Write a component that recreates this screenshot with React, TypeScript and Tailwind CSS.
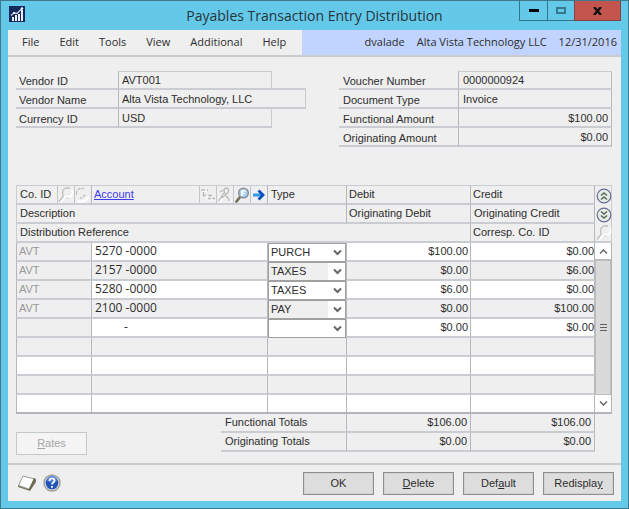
import type { ReactNode } from "react";

const menus = ["File", "Edit", "Tools", "View", "Additional", "Help"];

const vendorFields = [
  { id: "vendor-id", label: "Vendor ID", value: "AVT001", wide: false },
  { id: "vendor-name", label: "Vendor Name", value: "Alta Vista Technology, LLC", wide: true },
  { id: "currency-id", label: "Currency ID", value: "USD", wide: false },
];

const voucherFields = [
  { id: "voucher-number", label: "Voucher Number", value: "0000000924", money: false },
  { id: "document-type", label: "Document Type", value: "Invoice", money: false },
  { id: "functional-amount", label: "Functional Amount", value: "$100.00", money: true },
  { id: "originating-amount", label: "Originating Amount", value: "$0.00", money: true },
];

type Row = { co: string; account: string; type: string | null; debit: string; credit: string };

const blank: Row = { co: "", account: "", type: null, debit: "", credit: "" };

const rows: Row[] = [
  { co: "AVT", account: "5270 -0000", type: "PURCH", debit: "$100.00", credit: "$0.00" },
  { co: "AVT", account: "2157 -0000", type: "TAXES", debit: "$0.00", credit: "$6.00" },
  { co: "AVT", account: "5280 -0000", type: "TAXES", debit: "$6.00", credit: "$0.00" },
  { co: "AVT", account: "2100 -0000", type: "PAY", debit: "$0.00", credit: "$100.00" },
  { co: "", account: "-", type: "", debit: "$0.00", credit: "$0.00" },
  blank,
  blank,
  blank,
  blank,
];

const totals = [
  { label: "Functional Totals", debit: "$106.00", credit: "$106.00" },
  { label: "Originating Totals", debit: "$0.00", credit: "$0.00" },
];

function AppIcon() {
  return (
    <svg className="h-4 w-4" viewBox="0 0 16 16" aria-hidden="true">
      <rect width="16" height="16" fill="#14295c" />
      <path d="M3 15v-4h2v4zM6 15V9h2v6zM9 15V8h2v7zM12 15V4h2v11z" fill="#e8edf6" />
      <path d="M2 9.500 5 7l3 .5 5-5" fill="none" stroke="#c8d2e6" strokeWidth="1.300" />
      <circle cx="5" cy="7" r="1" fill="#fff" />
      <circle cx="13" cy="2.500" r="1.200" fill="#fff" />
    </svg>
  );
}

function FaintLookup() {
  return (
    <svg className="h-4 w-4" viewBox="0 0 16 16" fill="none" aria-hidden="true">
      <path d="M14 3c1.500 4 0 7-4 7H7L2.500 15.500" stroke="#fff" strokeWidth="1.800" />
      <path d="M5 9C4 5 5 2 8 1h4M1 14.500 5.500 9" stroke="#bdbdbd" strokeWidth="1.300" />
      <path d="M8 11h3" stroke="#d0d0d0" />
    </svg>
  );
}

function FaintNote() {
  return (
    <svg className="h-4 w-4" viewBox="0 0 16 16" fill="none" aria-hidden="true">
      <path d="M2 14.500h7l5-5" stroke="#fff" strokeWidth="1.800" />
      <path d="M1.500 8V4l3-2.500H9" stroke="#c0c0c0" strokeWidth="1.300" strokeDasharray="4 1" />
      <path d="M5 11h2m1-1.500 2-1.500" stroke="#c4c4c4" strokeWidth="1.600" />
    </svg>
  );
}

function FaintTree() {
  return (
    <svg className="h-4 w-4" viewBox="0 0 16 16" fill="none" aria-hidden="true">
      <path d="M2 4.500h5M5 10h5M10 13h5" stroke="#fff" strokeWidth="1.200" />
      <path d="M1 3h4m2 0h1M3.500 5v3.500H6M8 8.500h4M8 11.500h3m1.500 0H15" stroke="#b9b9b9" strokeWidth="1.400" />
    </svg>
  );
}

function FaintPerson() {
  return (
    <svg className="h-4 w-4" viewBox="0 0 16 16" fill="none" aria-hidden="true">
      <path d="M3 15 8 9m4 2 2 4" stroke="#fff" strokeWidth="1.200" />
      <path d="M1.500 14 7 6M3 5l3-2M8.500 7c-3-3-1-6 1-6s3 3 1 5L5 11m4-2 3 3v2" stroke="#b9b9b9" strokeWidth="1.300" />
    </svg>
  );
}

function Magnifier() {
  return (
    <svg className="h-4 w-4" viewBox="0 0 16 16" fill="none" aria-hidden="true">
      <path d="M6 10 2.500 14.500" stroke="#77725c" strokeWidth="2.800" strokeLinecap="round" />
      <circle cx="9.500" cy="6" r="4.800" fill="#a9d2f8" stroke="#8b8d96" strokeWidth="1.500" />
      <path d="M8 9V4h3.500M8 6.500h2.500" stroke="#fff" strokeWidth="1.500" />
    </svg>
  );
}

function BlueArrow() {
  return (
    <svg className="h-4 w-4" viewBox="0 0 16 16" fill="none" aria-hidden="true">
      <path d="M2 8h9" stroke="#2f9bea" strokeWidth="3" />
      <path d="M7.500 3.500 12 8l-4.500 4.500" stroke="#0a50bd" strokeWidth="2.800" />
    </svg>
  );
}

function RoundChevrons({ down }: { down?: boolean }) {
  return (
    <svg className="h-4 w-4" viewBox="0 0 16 16" fill="none" aria-hidden="true">
      <circle cx="8" cy="8" r="6.800" fill="#e6eee3" stroke="#6a6a98" strokeWidth="1.200" />
      <path
        d={down ? "M5 4.500 8 7l3-2.500M5 8.500 8 11l3-2.500" : "M5 7.500 8 5l3 2.500M5 11.500 8 9l3 2.500"}
        stroke="#5a665c"
        strokeWidth="1.500"
      />
    </svg>
  );
}

function Chevron({ up }: { up?: boolean }) {
  return (
    <svg className="h-[9px] w-[9px]" viewBox="0 0 9 9" fill="none" aria-hidden="true">
      <path d={up ? "M1 6.500 4.500 3 8 6.500" : "M1 2.500 4.500 6 8 2.500"} stroke="#606060" strokeWidth="1.400" />
    </svg>
  );
}

function IconButton({ label, children, ruled }: { label: string; children: ReactNode; ruled?: boolean }) {
  return (
    <button
      type="button"
      aria-label={label}
      className={`flex h-[17px] w-[17px] shrink-0 items-center justify-center ${ruled ? "border-l border-[#c4c4ca]" : ""}`}
    >
      {children}
    </button>
  );
}

const line = "border-[#cbccd2]";
const headCell = "h-[19px] border-b-2 border-[#cbccd2] p-0 text-left font-normal";
const ruleRight = "border-r border-r-[#b6b6bf]";
const actionButton =
  "h-[23px] w-[71px] border border-[#8e8e8e] bg-[#dddddd] text-center outline-1 -outline-offset-2 outline-[#d2d2d2]";

function DistributionRow({ row, index }: { row: Row; index: number }) {
  const odd = index % 2 === 0;
  const last = index === rows.length - 1;
  const shaded = row.type === null ? (index === 5 || index === 7) : !odd;
  const cell = `h-[19px] border-b-2 p-0 align-top leading-[17px] ${last ? "border-b-[#b3b4bb]" : "border-b-[#cbccd2]"}`;
  return (
    <tr className={shaded ? "bg-[#efefef]" : "bg-white"}>
      <td className={`${cell} ${ruleRight} border-l border-l-[#b6b6bf] pl-[2px] text-[#999999] ${row.type === null ? "" : "bg-[#efefef]"}`}>
        {row.co}
      </td>
      <td className={`${cell} ${ruleRight} font-['Open_Sans',sans-serif] text-[12px] ${row.account === "-" ? "pl-[32px]" : "pl-[3px]"}`}>
        <span className="block h-[17px] leading-[15px]">{row.account}</span>
      </td>
      <td className={`${cell} ${ruleRight}`}>
        {row.type !== null && (
          <div className="relative -mb-[2px] h-[19px] border border-[#a0a0a0] bg-white">
            <select
              aria-label={`Type, row ${index + 1}`}
              defaultValue={row.type}
              className={`block h-[17px] w-[59px] appearance-none pl-[2px] leading-[17px] ${odd ? "bg-white" : "bg-[#efefef]"}`}
            >
              <option>{row.type}</option>
            </select>
            <span className="pointer-events-none absolute top-1 right-[3px]">
              <svg className="h-[9px] w-[9px]" viewBox="0 0 9 9" fill="none" aria-hidden="true">
                <path d="M1 2.500 4.500 6 8 2.500" stroke="#666" strokeWidth="2" />
              </svg>
            </span>
          </div>
        )}
      </td>
      <td className={`${cell} ${ruleRight} pr-[2px] text-right`}>{row.debit}</td>
      <td className={`${cell} ${ruleRight} text-right`}>{row.credit}</td>
      {index === 0 && (
        <td rowSpan={rows.length} className="border-r border-b-2 border-[#b3b4bb] bg-[#dadada] p-0 align-top">
          <div className="flex h-[169px] flex-col">
            <button type="button" aria-label="Scroll up" className="flex h-[17px] items-center justify-center border-b border-[#b8b8b8] bg-white">
              <Chevron up />
            </button>
            <div className="flex flex-1 items-center justify-center border border-[#bdbdbd]">
              <svg className="h-[9px] w-[7px]" viewBox="0 0 7 9" aria-hidden="true">
                <path d="M0 1.500h7M0 4.500h7M0 7.500h7" stroke="#606060" />
              </svg>
            </div>
            <button type="button" aria-label="Scroll down" className="flex h-[17px] items-center justify-center bg-white">
              <Chevron />
            </button>
          </div>
        </td>
      )}
    </tr>
  );
}

export default function App() {
  return (
    <div className="flex min-h-screen flex-col border border-[#41798c] bg-[#64c9e9] px-[7px] pb-[7px] font-['Liberation_Sans',Arial,sans-serif] text-[11px] text-[#2d2d2d]">
      <header className="grid h-[29px] grid-cols-[1fr_auto_1fr] font-['Open_Sans',sans-serif]">
        <div className="pt-[5px] pl-[1px]">
          <AppIcon />
        </div>
        <h1 className="text-[14px] leading-[29px] text-[#26343a]">Payables Transaction Entry Distribution</h1>
        <div className="flex h-5 justify-end">
          <button type="button" aria-label="Minimize" className="flex w-[29px] items-center justify-center border border-t-0 border-[#34738a]">
            <span className="h-[3px] w-[10px] bg-black" />
          </button>
          <button type="button" aria-label="Maximize" className="flex w-[26px] items-center justify-center border-b border-[#34738a]">
            <span className="h-[7px] w-[10px] border-2 border-[#35798d]" />
          </button>
          <button type="button" aria-label="Close" className="flex w-[47px] items-center justify-center border border-t-0 border-[#7f4541] bg-[#c2564e]">
            <svg className="h-2 w-[9px]" viewBox="0 0 9 8" aria-hidden="true">
              <path d="m1 0 7 8M8 0 1 8" stroke="#111" strokeWidth="2.400" />
            </svg>
          </button>
        </div>
      </header>

      <main className="flex flex-1 flex-col bg-[#efefef]">
        <div className={`flex h-[27px] border-b-2 ${line} font-['Open_Sans',sans-serif] text-[11px]`}>
          <nav className="flex w-[294px] shrink-0 items-center gap-5 pl-[14px]">
            {menus.map((menu) => (
              <button type="button" key={menu}>
                {menu}
              </button>
            ))}
          </nav>
          <div className="flex flex-1 items-center justify-end gap-3 bg-[#c1d4ff] pr-1 whitespace-nowrap">
            <span>dvalade</span>
            <span>Alta Vista Technology LLC</span>
            <span>12/31/2016</span>
          </div>
        </div>

        <div className="flex h-32 items-start justify-between pt-[14px] pr-[9px] pl-2">
          <div>
            {vendorFields.map((field, i) => (
              <div key={field.id} className="flex h-[19px] items-end">
                <label htmlFor={field.id} className={`h-[19px] w-[102px] border-b-2 ${line} pt-[2px] pl-[3px] leading-[17px]`}>
                  {field.label}
                </label>
                <input
                  id={field.id}
                  readOnly
                  defaultValue={field.value}
                  className={`border-x border-b-2 ${line} border-l-[#b6b6bf] px-[3px] ${field.wide ? "h-[21px] w-[188px] border-t-2" : "h-[19px] w-[154px]"} ${i === 0 ? "border-t" : ""}`}
                />
              </div>
            ))}
          </div>
          <div>
            {voucherFields.map((field, i) => (
              <div key={field.id} className="flex h-[19px]">
                <label htmlFor={field.id} className={`w-[119px] border-b-2 ${line} pt-[2px] pl-1 leading-[17px]`}>
                  {field.label}
                </label>
                <input
                  id={field.id}
                  readOnly
                  defaultValue={field.value}
                  className={`h-[19px] w-[154px] border-x border-b-2 ${line} border-x-[#b6b6bf] pr-[3px] pl-1 ${field.money ? "text-right" : ""} ${i === 0 ? "border-t" : ""}`}
                />
              </div>
            ))}
          </div>
        </div>

        <div className="pr-[9px] pl-2">
          <table className="w-full table-fixed border-separate border-spacing-0">
            <colgroup>
              <col className="w-[76px]" />
              <col />
              <col className="w-[79px]" />
              <col className="w-[124px]" />
              <col className="w-[124px]" />
              <col className="w-[17px]" />
            </colgroup>
            <thead>
              <tr>
                <th className={`${headCell} ${ruleRight} border-t border-l`}>
                  <div className="flex h-[17px] items-center justify-between">
                    <span className="pl-[3px]">Co. ID</span>
                    <span className="flex">
                      <IconButton label="Look up company" ruled><FaintLookup /></IconButton>
                      <IconButton label="Company note" ruled><FaintNote /></IconButton>
                    </span>
                  </div>
                </th>
                <th className={`${headCell} ${ruleRight} border-t`}>
                  <div className="flex h-[17px] items-center justify-between">
                    <a href="#account" className="pl-[2px] text-[#3b3bf0] underline">Account</a>
                    <span className="flex">
                      <IconButton label="Account hierarchy" ruled><FaintTree /></IconButton>
                      <IconButton label="Account alias" ruled><FaintPerson /></IconButton>
                      <IconButton label="Look up account" ruled><Magnifier /></IconButton>
                      <IconButton label="Expand account" ruled><BlueArrow /></IconButton>
                    </span>
                  </div>
                </th>
                <th className={`${headCell} ${ruleRight} border-t pl-[3px]`}>Type</th>
                <th className={`${headCell} ${ruleRight} border-t pl-[2px]`}>Debit</th>
                <th className={`${headCell} ${ruleRight} border-t pl-[2px]`}>Credit</th>
                <th className="h-[19px] border-t border-r border-[#cbccd2] p-0">
                  <IconButton label="Hide details"><RoundChevrons /></IconButton>
                </th>
              </tr>
              <tr>
                <th colSpan={3} className={`${headCell} ${ruleRight} border-l pl-[3px]`}>Description</th>
                <th className={`${headCell} ${ruleRight} pl-[2px]`}>Originating Debit</th>
                <th className={`${headCell} ${ruleRight} pl-[3px]`}>Originating Credit</th>
                <th className="h-[19px] border-r border-[#cbccd2] p-0">
                  <IconButton label="Show details"><RoundChevrons down /></IconButton>
                </th>
              </tr>
              <tr>
                <th colSpan={4} className={`${headCell} ${ruleRight} border-l pl-[3px]`}>Distribution Reference</th>
                <th className={`${headCell} ${ruleRight} pl-[2px]`}>Corresp. Co. ID</th>
                <th className={`${headCell} border-r`}>
                  <IconButton label="Look up corresponding company"><FaintLookup /></IconButton>
                </th>
              </tr>
            </thead>
            <tbody>
              {rows.map((row, index) => (
                <DistributionRow key={index} row={row} index={index} />
              ))}
            </tbody>
          </table>
        </div>

        <div className="flex items-start justify-between pr-[26px] pl-2">
          <button type="button" disabled className="mt-[18px] h-[23px] w-[71px] border border-[#c3c9ca] bg-[#f4f4f4] text-[#a6a6a6]">
            <u>R</u>ates
          </button>
          <table className="w-[374px] table-fixed border-separate border-spacing-0">
            <colgroup>
              <col />
              <col className="w-[124px]" />
              <col className="w-[124px]" />
            </colgroup>
            <tbody>
              {totals.map((total) => (
                <tr key={total.label}>
                  <th className={`${headCell} ${ruleRight} pl-1`}>{total.label}</th>
                  <td className={`h-[19px] border-b-2 ${line} ${ruleRight} p-0 pr-[3px] text-right`}>{total.debit}</td>
                  <td className={`h-[19px] border-b-2 ${line} ${ruleRight} p-0 pr-[3px] text-right`}>{total.credit}</td>
                </tr>
              ))}
            </tbody>
          </table>
        </div>

        <footer className={`mt-2 flex flex-1 items-center justify-between border-t-2 ${line} pr-[7px] pl-[9px]`}>
          <div className="flex items-center gap-[6px]">
            <button type="button" aria-label="Notes">
              <svg className="h-[18px] w-5" viewBox="0 0 20 18" aria-hidden="true">
                <path d="m12 15 7-10v3l-6 9L1 13v-2z" fill="#77735a" />
                <path d="M6 2 17.500 5 12 15 1.500 11.500z" fill="#fff" stroke="#9b9b90" />
                <path d="m17 4 2 1-6 11-1-1z" fill="#6b6852" />
              </svg>
            </button>
            <button type="button" aria-label="Help">
              <svg className="h-[18px] w-[18px]" viewBox="0 0 18 18" fill="none" aria-hidden="true">
                <circle cx="9" cy="9" r="8" fill="#d4d4d4" stroke="#a2a2a2" strokeWidth="1.500" />
                <circle cx="9" cy="9" r="6.300" fill="#2453bb" />
                <path d="M4 7a5 5 0 0 1 10 0q-5 3-10 0" fill="#4679d8" />
                <path d="M6.500 7c0-3.500 5-3.500 5-.5 0 2-2.500 2-2.500 4m0 1.500v1.800" stroke="#fff" strokeWidth="1.800" />
              </svg>
            </button>
          </div>
          <div className="flex gap-[9px]">
            <button type="button" className={actionButton}>OK</button>
            <button type="button" className={actionButton}><u>D</u>elete</button>
            <button type="button" className={actionButton}>Def<u>a</u>ult</button>
            <button type="button" className={actionButton}>Redispla<u>y</u></button>
          </div>
        </footer>
      </main>
    </div>
  );
}
